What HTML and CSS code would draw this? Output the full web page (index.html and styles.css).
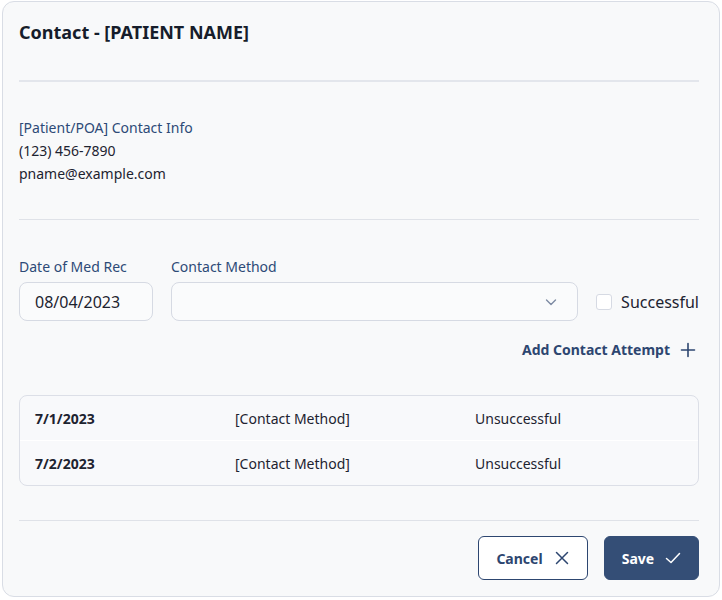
FILE: index.html
```html
<!DOCTYPE html>
<html lang="en">

<head>
    <meta charset="UTF-8">
    <title>Contact</title>
    <link rel="stylesheet" href="styles.css">
</head>

<body>
    <div class="modal">
        <div class="modal-header">
            <h1>Contact - [PATIENT NAME]</h1>
        </div>

        <div class="info">
            <div class="label">[Patient/POA] Contact Info</div>
            <div>(123) 456-7890</div>
            <div>pname@example.com</div>
        </div>

        <div class="form">
            <div class="form-row">
                <div class="field field-date">
                    <div class="label">Date of Med Rec</div>
                    <div class="input">08/04/2023</div>
                </div>
                <div class="field field-method">
                    <div class="label">Contact Method</div>
                    <div class="input select">
                        <svg width="14" height="14" viewBox="0 0 14 14"><path d="M2.5 5 L7 9.5 L11.5 5" fill="none" stroke="#7d8aa3" stroke-width="1.4" stroke-linecap="round" stroke-linejoin="round"/></svg>
                    </div>
                </div>
                <label class="check">
                    <span class="box"></span>
                    Successful
                </label>
            </div>
            <div class="add-row">
                <a class="add">Add Contact Attempt
                    <svg width="16" height="16" viewBox="0 0 16 16"><path d="M8 1.5 V14.5 M1.5 8 H14.5" stroke="#2d4670" stroke-width="1.6" stroke-linecap="round"/></svg>
                </a>
            </div>

            <div class="attempts">
                <div class="attempt">
                    <div class="col-date">7/1/2023</div>
                    <div class="col-method">[Contact Method]</div>
                    <div class="col-status">Unsuccessful</div>
                </div>
                <div class="attempt">
                    <div class="col-date">7/2/2023</div>
                    <div class="col-method">[Contact Method]</div>
                    <div class="col-status">Unsuccessful</div>
                </div>
            </div>
        </div>

        <div class="modal-footer">
            <button class="btn btn-cancel">Cancel
                <svg width="16" height="16" viewBox="0 0 16 16"><path d="M2.5 2.5 L13.5 13.5 M13.5 2.5 L2.5 13.5" stroke="#2d4670" stroke-width="1.5" stroke-linecap="round"/></svg>
            </button>
            <button class="btn btn-save">Save
                <svg width="16" height="16" viewBox="0 0 16 16"><path d="M1.5 8.5 L6 12.5 L14.5 3.5" fill="none" stroke="#fff" stroke-width="1.5" stroke-linecap="round" stroke-linejoin="round"/></svg>
            </button>
        </div>
    </div>
</body>

</html>
```

FILE: styles.css
```css
html,
body {
    margin: 0;
    padding: 0;
    background: #fff;
    font-family: "Noto Sans", "Open Sans", sans-serif;
    font-size: 14px;
    color: #1d2330;
}

.modal {
    margin: 1px 2px 2px 2px;
    height: 596px;
    box-sizing: border-box;
    border: 1px solid #d9dde5;
    border-radius: 12px;
    background: #f8f9fa;
    padding: 0 20px 0 16px;
    display: flex;
    flex-direction: column;
}

.modal-header {
    height: 78px;
    border-bottom: 2px solid #e3e6ec;
}

h1 {
    margin: 0;
    padding-top: 17px;
    font-size: 18px;
    font-weight: bold;
    line-height: 26px;
    color: #161d2b;
}

.info {
    padding: 34px 0 34px;
    border-bottom: 1px solid #dfe2e8;
    line-height: 23px;
}

.label {
    color: #2d4a77;
}

.form {
    padding-top: 35px;
}

.form-row {
    display: flex;
    align-items: flex-end;
}

.field .label {
    line-height: 23px;
    margin-bottom: 4px;
}

.field-date {
    width: 134px;
    margin-right: 18px;
}

.field-method {
    flex: 1;
    margin-right: 18px;
}

.input {
    height: 39px;
    box-sizing: border-box;
    border: 1px solid #d6dae3;
    border-radius: 8px;
    background: #fafbfc;
    padding: 0 15px;
    display: flex;
    align-items: center;
    font-size: 16px;
}

.select {
    justify-content: flex-end;
    padding-right: 19px;
}

.check {
    height: 39px;
    display: flex;
    align-items: center;
    font-size: 16px;
}

.box {
    width: 14px;
    height: 14px;
    border: 1px solid #d6dae3;
    border-radius: 3px;
    background: #fff;
    margin-right: 9px;
}

.add-row {
    display: flex;
    justify-content: flex-end;
    padding: 18px 3px 0 0;
}

.add {
    display: flex;
    align-items: center;
    font-weight: bold;
    color: #2d4670;
    line-height: 22px;
}

.add svg {
    margin-left: 10px;
}

.attempts {
    margin-top: 34px;
    border: 1px solid #dcdfe7;
    border-radius: 8px;
    background: #f8f9fb;
    overflow: hidden;
}

.attempt {
    height: 44px;
    display: flex;
    align-items: center;
    padding: 0 15px;
}

.attempt + .attempt {
    border-top: 1px solid #fff;
}

.col-date {
    width: 200px;
    font-weight: bold;
}

.col-method {
    width: 240px;
}

.modal-footer {
    margin-top: 34px;
    border-top: 1px solid #dfe2e8;
    padding-top: 15px;
    display: flex;
    justify-content: flex-end;
    gap: 16px;
}

.btn {
    height: 44px;
    border-radius: 6px;
    font-family: inherit;
    font-size: 14px;
    font-weight: bold;
    display: flex;
    align-items: center;
    gap: 11px;
}

.btn-cancel {
    width: 110px;
    justify-content: center;
    border: 1px solid #2d4670;
    background: #fff;
    color: #2d4670;
}

.btn-save {
    width: 95px;
    justify-content: center;
    border: 1px solid #344e76;
    background: #344e76;
    color: #fff;
}
```
